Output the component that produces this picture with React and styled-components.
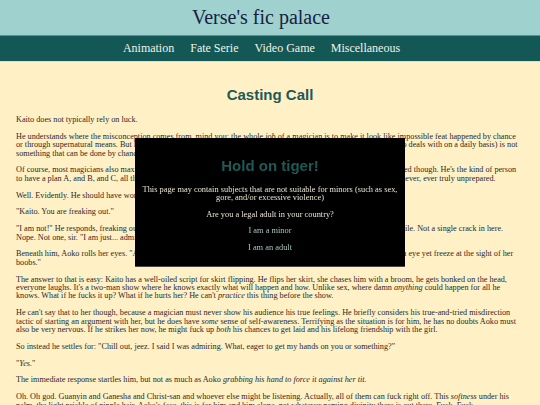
import React from 'react'
import styled, { createGlobalStyle } from 'styled-components'

const GlobalStyle = createGlobalStyle`
  html, body { margin: 0; padding: 0; }
  body {
    background: #fff0c6;
    font-family: "Liberation Serif", "Times New Roman", serif;
    color: #2b2a26;
  }
`

const Header = styled.header`
  background: #9fd1cf;
  height: 35px;
  display: flex;
  align-items: center;
  justify-content: center;
  padding-right: 18px;
  border-bottom: 1px solid #5f8f8c;
`
const SiteTitle = styled.h1`
  margin: 0;
  font-weight: normal;
  font-size: 20px;
  color: #16213f;
`
const Nav = styled.nav`
  background: #135855;
  height: 25px;
  display: flex;
  align-items: center;
  justify-content: center;
  gap: 16px;
  padding-right: 17px;
  border-bottom: 1px solid #cfe3d6;
`
const NavLink = styled.a`
  color: #f2f2ea;
  font-size: 12px;
  text-decoration: none;
`

const Main = styled.main`
  padding: 0 16px;
`
const ChapterTitle = styled.h2`
  margin: 24px 0 13px;
  text-align: center;
  font-family: "Liberation Sans", Arial, sans-serif;
  font-weight: bold;
  font-size: 15px;
  color: #1d5a57;
`
const Para = styled.p`
  margin: 0 0 8.4px;
  font-size: 8.2px;
  line-height: 8.4px;
`

/* age gate sits over the chapter, centred in the viewport */
const Overlay = styled.div`
  position: fixed;
  inset: 0;
  display: flex;
  align-items: center;
  justify-content: center;
  will-change: transform;
`
const Dialog = styled.div`
  width: 270px;
  box-sizing: border-box;
  background: #000;
  border-bottom: 1px solid #4a4a44;
  padding: 19px 6px 14px;
  text-align: center;
  color: #e8e2d2;
`
const DialogTitle = styled.h3`
  margin: 0 0 12px;
  font-family: "Liberation Sans", Arial, sans-serif;
  font-weight: bold;
  font-size: 15px;
  color: #1d5a57;
`
const DialogText = styled.p`
  margin: 0 0 8px;
  font-size: 8.4px;
  line-height: 8.5px;
`
const Choice = styled.a`
  display: block;
  margin-top: 8px;
  font-size: 8.4px;
  line-height: 8.5px;
  color: #a3c3c1;
  text-decoration: none;
`

const navItems = ['Animation', 'Fate Serie', 'Video Game', 'Miscellaneous']

export default function App() {
  return (
    <>
      <GlobalStyle />
      <Header>
        <SiteTitle>Verse's fic palace</SiteTitle>
      </Header>
      <Nav>
        {navItems.map((item) => (
          <NavLink key={item} href="#">{item}</NavLink>
        ))}
      </Nav>
      <Main>
        <ChapterTitle>Casting Call</ChapterTitle>
        <Para>Kaito does not typically rely on luck.</Para>
        <Para>
          He understands where the misconception comes from, mind you; the whole <em>job</em> of a magician is to make it look like impossible feat happened by chance or through supernatural means. But luck in the sense most people think of it (the kind of sheer, dumb fortune that Kaito deals with on a daily basis) is not something that can be done by chance alone.
        </Para>
        <Para>
          Of course, most magicians also maximize their odds with planning, and Kaito is no different, not even when he is rushed though. He's the kind of person to have a plan A, and B, and C, all the way down to Z and then some more, so that no matter what happens next he is never, ever truly unprepared.
        </Para>
        <Para>Well. Evidently. He should have worked on a plan for this.</Para>
        <Para>"Kaito. You are freaking out."</Para>
        <Para>
          "I am not!" He responds, freaking out, and he plasters on his very best, most convincing and unbothered poker face smile. Not a single crack in here. Nope. Not one, sir. "I am just... admiring."
        </Para>
        <Para>
          Beneath him, Aoko rolls her eyes. "A grown man who can flip skirts in front of the whole class without even batting an eye yet freeze at the sight of her boobs."
        </Para>
        <Para>
          The answer to that is easy: Kaito has a well-oiled script for skirt flipping. He flips her skirt, she chases him with a broom, he gets bonked on the head, everyone laughs. It's a two-man show where he knows exactly what will happen and how. Unlike sex, where damn <em>anything</em> could happen for all he knows. What if he fucks it up? What if he hurts her? He can't <em>practice</em> this thing before the show.
        </Para>
        <Para>
          He can't say that to her though, because a magician must never show his audience his true feelings. He briefly considers his true-and-tried misdirection tactic of starting an argument with her, but he does have <em>some</em> sense of self-awareness. Terrifying as the situation is for him, he has no doubts Aoko must also be very nervous. If he strikes her now, he might fuck up <em>both</em> his chances to get laid and his lifelong friendship with the girl.
        </Para>
        <Para>
          So instead he settles for: "Chill out, jeez. I said I was admiring. What, eager to get my hands on you or something?"
        </Para>
        <Para>"<em>Yes.</em>"</Para>
        <Para>
          The immediate response startles him, but not as much as Aoko <em>grabbing his hand to force it against her tit.</em>
        </Para>
        <Para>
          Oh. Oh god. Guanyin and Ganesha and Christ-san and whoever else might be listening. Actually, all of them can fuck right off. This <em>softness</em> under his palm, the light prickle of nipple hair, Aoko's face, this is for him and him alone, not whatever naming divinity there is out there. Fuck. Fuck.
        </Para>
      </Main>
      <Overlay>
        <Dialog>
          <DialogTitle>Hold on tiger!</DialogTitle>
          <DialogText>
            This page may contain subjects that are not suitable for minors (such as sex, gore, and/or excessive violence)
          </DialogText>
          <DialogText>Are you a legal adult in your country?</DialogText>
          <Choice href="#">I am a minor</Choice>
          <Choice href="#">I am an adult</Choice>
        </Dialog>
      </Overlay>
    </>
  )
}
